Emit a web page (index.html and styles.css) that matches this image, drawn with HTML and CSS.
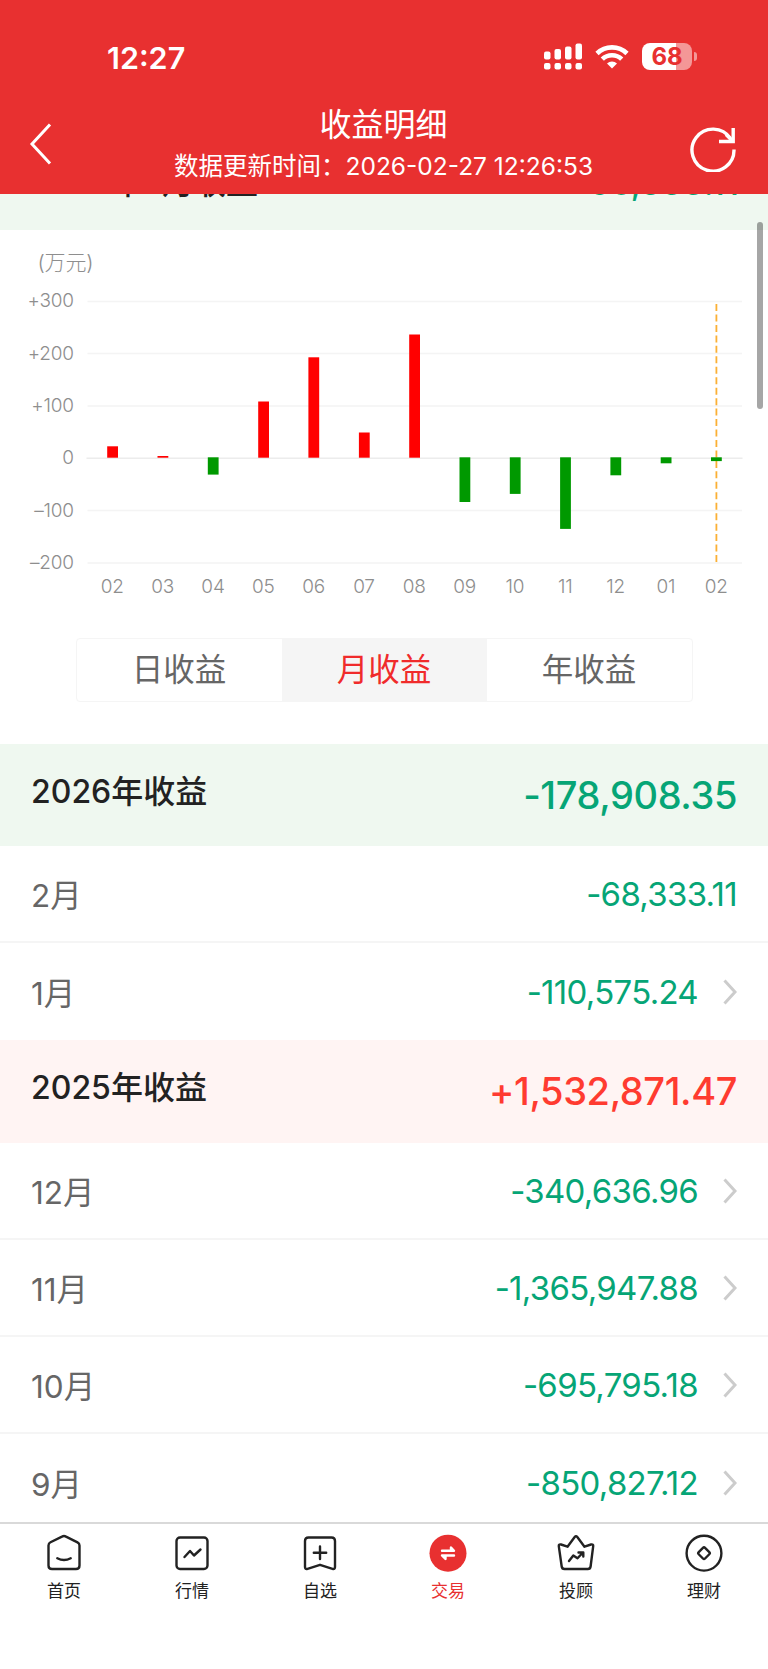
FILE: index.html
```html
<!DOCTYPE html>
<html lang="zh-CN">
<head>
  <meta charset="UTF-8">
  <meta name="viewport" content="width=device-width, initial-scale=1.0">
  <title>收益明细</title>
  <link rel="stylesheet" href="styles.css">
</head>
<body>
  <div class="app">
    <header class="header">
      <div class="status-bar">
        <span class="clock">12:27</span>
        <div class="status-icons">
          <svg class="signal" width="39" height="28" viewBox="0 0 39 28" fill="#fff">
            <rect x="0" y="8.500" width="6.500" height="8" rx="2"/>
            <rect x="10.500" y="6" width="6.500" height="10.500" rx="2"/>
            <rect x="21" y="3.500" width="6.500" height="13" rx="2"/>
            <rect x="31.500" y="0.500" width="6.500" height="16" rx="2"/>
            <rect x="0" y="20" width="6.500" height="6.500" rx="2"/>
            <rect x="10.500" y="20" width="6.500" height="6.500" rx="2"/>
            <rect x="21" y="20" width="6.500" height="6.500" rx="2"/>
            <rect x="31.500" y="20" width="6.500" height="6.500" rx="2"/>
          </svg>
          <svg class="wifi" width="34" height="26" viewBox="0 0 34 26" fill="none" stroke="#fff" stroke-width="4.600">
            <path d="M2 9.500a21.500 21.500 0 0 1 30 0"/>
            <path d="M7.300 15.200a13.800 13.800 0 0 1 19.400 0"/>
            <path d="M17 24.500l-5-5a7.100 7.100 0 0 1 10 0z" fill="#fff" stroke="none"/>
          </svg>
          <div class="battery">68</div>
          <span class="battery-tip"></span>
        </div>
      </div>
      <div class="nav-bar">
        <svg class="back" width="24" height="42" viewBox="0 0 24 42" fill="none" stroke="#fff" stroke-width="3">
          <path d="M21 1.500L3 21l18 19.500"/>
        </svg>
        <div class="nav-title">
          <h1>收益明细</h1>
          <p>数据更新时间：<span>2026-02-27 12:26:53</span></p>
        </div>
        <svg class="refresh" width="46" height="46" viewBox="0 0 46 46" fill="none" stroke="#fff" stroke-width="3.400">
          <path d="M44 23.500A21 21 0 1 1 40.500 12.500"/>
          <path d="M43.200 2v13.500H29"/>
          <path d="M36 8.500l6.500 6.500"/>
        </svg>
      </div>
    </header>

    <main class="content">
      <div class="month-total">
        <span class="label">2026年2月收益</span>
        <span class="amount">-68,333.11</span>
      </div>

      <svg class="chart" width="768" height="380" viewBox="0 230 768 380">
        <text class="unit" x="37.500" y="270">(万元)</text>
        <g class="grid">
          <path d="M87.500 301.500H742M87.500 353.500H742M87.500 406H742M87.500 510.500H742M87.500 563H742"/>
          <path class="zero" d="M86.500 458.300H742.500"/>
        </g>
        <g class="y-axis">
          <text x="73.800" y="307.200">+300</text>
          <text x="73.800" y="359.500">+200</text>
          <text x="73.800" y="411.800">+100</text>
          <text x="73.800" y="464.100">0</text>
          <text x="73.800" y="516.500">–100</text>
          <text x="73.800" y="568.800">–200</text>
        </g>
        <path class="cursor" d="M716.400 304V562"/>
        <g class="gain">
          <rect x="107.200" y="446.300" width="10.800" height="11.400"/>
          <rect x="157.500" y="456" width="10.800" height="1.700"/>
          <rect x="258.200" y="401.500" width="10.800" height="56.200"/>
          <rect x="308.400" y="357.300" width="10.800" height="100.400"/>
          <rect x="358.900" y="432.500" width="10.800" height="25.200"/>
          <rect x="409.200" y="334.500" width="10.800" height="123.200"/>
        </g>
        <g class="loss">
          <rect x="207.800" y="457.300" width="10.800" height="17.300"/>
          <rect x="459.500" y="457.300" width="10.800" height="44.700"/>
          <rect x="509.800" y="457.300" width="10.800" height="36.600"/>
          <rect x="560.100" y="457.300" width="10.800" height="71.600"/>
          <rect x="610.400" y="457.300" width="10.800" height="18"/>
          <rect x="660.700" y="457.300" width="10.800" height="6"/>
          <rect x="711" y="457.300" width="10.800" height="3.800"/>
        </g>
        <g class="x-axis">
          <text x="112.300" y="593">02</text>
          <text x="162.600" y="593">03</text>
          <text x="213" y="593">04</text>
          <text x="263.300" y="593">05</text>
          <text x="313.600" y="593">06</text>
          <text x="364" y="593">07</text>
          <text x="414.300" y="593">08</text>
          <text x="464.600" y="593">09</text>
          <text x="515" y="593">10</text>
          <text x="565.300" y="593">11</text>
          <text x="615.600" y="593">12</text>
          <text x="666" y="593">01</text>
          <text x="716.300" y="593">02</text>
        </g>
      </svg>

      <div class="tabs">
        <div class="tab">日收益</div>
        <div class="tab active">月收益</div>
        <div class="tab">年收益</div>
      </div>

      <section class="year">
        <div class="year-head down">
          <h2>2026年收益</h2>
          <strong>-178,908.35</strong>
        </div>
        <div class="row"><span>2月</span><b>-68,333.11</b></div>
        <div class="row"><span>1月</span><b>-110,575.24</b>
          <svg class="arrow" viewBox="0 0 14 26"><path d="M1.500 1.500L12 13 1.500 24.500"/></svg>
        </div>
      </section>

      <section class="year">
        <div class="year-head up">
          <h2>2025年收益</h2>
          <strong>+1,532,871.47</strong>
        </div>
        <div class="row"><span>12月</span><b>-340,636.96</b>
          <svg class="arrow" viewBox="0 0 14 26"><path d="M1.500 1.500L12 13 1.500 24.500"/></svg>
        </div>
        <div class="row"><span>11月</span><b>-1,365,947.88</b>
          <svg class="arrow" viewBox="0 0 14 26"><path d="M1.500 1.500L12 13 1.500 24.500"/></svg>
        </div>
        <div class="row"><span>10月</span><b>-695,795.18</b>
          <svg class="arrow" viewBox="0 0 14 26"><path d="M1.500 1.500L12 13 1.500 24.500"/></svg>
        </div>
        <div class="row"><span>9月</span><b>-850,827.12</b>
          <svg class="arrow" viewBox="0 0 14 26"><path d="M1.500 1.500L12 13 1.500 24.500"/></svg>
        </div>
      </section>
      <div class="scrollbar"></div>
    </main>

    <nav class="tab-bar">
      <a class="item">
        <svg viewBox="0 0 40 40">
          <path d="M20 3Q20.800 3 21.500 3.400L33.500 9.300Q35.500 10.300 35.500 12.500V32.500Q35.500 36 32 36H8Q4.500 36 4.500 32.500V12.500Q4.500 10.300 6.500 9.300L18.500 3.400Q19.200 3 20 3Z"/>
          <path d="M13.300 25.200Q20 28.700 26.700 25.200"/>
        </svg>
        <span>首页</span>
      </a>
      <a class="item">
        <svg viewBox="0 0 40 40">
          <rect x="4.500" y="4.500" width="31" height="31.500" rx="3.500"/>
          <path d="M12.500 24L18 18l4 4.500 6.500-6"/>
        </svg>
        <span>行情</span>
      </a>
      <a class="item">
        <svg viewBox="0 0 40 40">
          <path d="M8.500 4.500H31.500Q35 4.500 35 8V34Q35 36.500 32.500 35.800L20 31.800 7.500 35.800Q5 36.500 5 34V8Q5 4.500 8.500 4.500Z"/>
          <path d="M20 13.500V26M13.800 19.700H26.200"/>
        </svg>
        <span>自选</span>
      </a>
      <a class="item active">
        <svg viewBox="0 0 40 40">
          <circle cx="20" cy="20.200" r="18.500"/>
          <path d="M14 17.700H26L23 14.500V17M26 22.500H14L17.500 26V23"/>
        </svg>
        <span>交易</span>
      </a>
      <a class="item">
        <svg viewBox="0 0 40 40">
          <path d="M20 3.300Q20.700 3.300 21.300 4L28.500 13.700 35 11.500Q37.500 10.800 37.200 13.200L34.600 33.500Q34.300 36 31.800 36H8.500Q6 36 5.700 33.500L2.800 13.200Q2.500 10.800 5 11.500L11.500 13.700 18.700 4Q19.300 3.300 20 3.300Z"/>
          <path d="M13 28l4.300-5.500 4.200 2.800L26.500 20M22.500 19.500h4.800v4"/>
        </svg>
        <span>投顾</span>
      </a>
      <a class="item">
        <svg viewBox="0 0 40 40">
          <circle cx="20" cy="20.200" r="17.400"/>
          <rect x="15.500" y="15.700" width="9" height="9" rx="1.500" transform="rotate(45 20 20.200)"/>
        </svg>
        <span>理财</span>
      </a>
    </nav>
  </div>
</body>
</html>
```
FILE: styles.css
```css
* {
  box-sizing: border-box;
}
body {
  margin: 0;
  font-family: Inter, "Noto Sans CJK SC", sans-serif;
  background: #fff;
  color: #222;
}
h1, h2, p {
  margin: 0;
  font-weight: 400;
}
.app {
  width: 768px;
  height: 1669px;
  display: flex;
  flex-direction: column;
  overflow: hidden;
}

/* header */
.header {
  flex: none;
  height: 194px;
  background: #e83030;
  color: #fff;
}
.status-bar {
  height: 100px;
  padding: 14px 71px 0 107px;
  display: flex;
  justify-content: space-between;
  align-items: center;
}
.clock {
  font-size: 30.500px;
  font-weight: 600;
}
.status-icons {
  display: flex;
  align-items: center;
  margin-top: -1px;
}
.wifi {
  margin: 0 13px 0 12px;
}
.battery {
  width: 50px;
  height: 27px;
  line-height: 27px;
  border-radius: 8px;
  background: linear-gradient(90deg, #fff 68%, #f49797 68%);
  color: #e83030;
  font-size: 24px;
  font-weight: 700;
  text-align: center;
}
.battery-tip {
  width: 3px;
  height: 9px;
  margin-left: 2px;
  border-radius: 0 3px 3px 0;
  background: #f49797;
}
.nav-bar {
  height: 94px;
  padding: 0 32px 0 29px;
  display: flex;
  justify-content: space-between;
}
.back {
  margin: 23px 24px 0 0;
}
.refresh {
  margin-top: 26px;
}
.nav-title {
  padding-top: 1px;
  text-align: center;
}
.nav-title h1 {
  font-size: 32px;
  line-height: 48px;
}
.nav-title p {
  font-size: 24.500px;
  line-height: 34px;
  white-space: nowrap;
}

/* scrolled content */
.content {
  position: relative;
  flex: 1;
  min-height: 0;
  overflow: hidden;
}
.month-total {
  height: 36px;
  padding: 0 29px 0 30px;
  display: flex;
  justify-content: space-between;
  align-items: flex-start;
  overflow: hidden;
  background: #eff8f0;
}
.month-total .label {
  margin-top: -34px;
  font-size: 32px;
  line-height: 46px;
  font-weight: 500;
}
.month-total .amount {
  margin-top: -34px;
  font-size: 34px;
  line-height: 46px;
  font-weight: 500;
  color: #06a576;
}
.chart {
  display: block;
}
.chart text {
  font-size: 19px;
  font-weight: 300;
  letter-spacing: -0.200px;
  fill: #8e8e8e;
}
.chart .unit {
  font-size: 21px;
}
.y-axis {
  text-anchor: end;
}
.x-axis {
  text-anchor: middle;
}
.grid {
  stroke: #f4f4f4;
  stroke-width: 1.500;
}
.grid .zero {
  stroke: #ececec;
}
.cursor {
  stroke: #fbb034;
  stroke-width: 1.800;
  stroke-dasharray: 7 3.460;
}
.gain {
  fill: #f00;
}
.loss {
  fill: #090;
}
.tabs {
  width: 617px;
  height: 64px;
  margin: 28px auto 42px;
  display: flex;
  border: 1px solid #f5f5f5;
  border-radius: 4px;
}
.tab {
  flex: 1;
  font-size: 31.500px;
  line-height: 61px;
  text-align: center;
  color: #666;
}
.tab.active {
  background: #f5f5f5;
  color: #f02b2b;
}
.year-head {
  height: 102px;
  padding: 0 31px;
  display: flex;
  justify-content: space-between;
}
.year-head.down {
  background: #eff8f0;
  color: #06a576;
}
.year-head.up {
  height: 103px;
  background: #fff4f3;
  color: #ff3b30;
}
.year-head h2 {
  font-size: 32px;
  line-height: 95px;
  font-weight: 500;
  color: #222;
}
.year-head strong {
  font-size: 38px;
  line-height: 103px;
  font-weight: 500;
  letter-spacing: -0.400px;
}
.row {
  height: 97px;
  padding: 0 31px;
  display: flex;
  align-items: center;
  border-bottom: 2px solid #f5f5f5;
}
.row:last-child {
  border-bottom: none;
}
.row span {
  flex: 1;
  padding-bottom: 2px;
  font-size: 31.500px;
  color: #666;
}
.row b {
  padding-top: 1px;
  font-size: 33px;
  font-weight: 400;
  letter-spacing: -0.700px;
  color: #06a576;
}
.arrow {
  width: 14px;
  height: 26px;
  margin-left: 25px;
  fill: none;
  stroke: #ccc;
  stroke-width: 3;
}
.scrollbar {
  position: absolute;
  top: 28px;
  right: 5px;
  width: 6px;
  height: 187px;
  border-radius: 3px;
  background: rgba(0, 0, 0, 0.35);
}

/* bottom tab bar */
.tab-bar {
  flex: none;
  height: 147px;
  padding-top: 9px;
  display: flex;
  border-top: 2px solid #d9d9d9;
  background: #fff;
}
.item {
  flex: 1;
  display: flex;
  flex-direction: column;
  align-items: center;
}
.item svg {
  width: 40px;
  height: 40px;
  fill: none;
  stroke: #222;
  stroke-width: 2.400;
  stroke-linecap: round;
  stroke-linejoin: round;
}
.item span {
  margin-top: 6px;
  font-size: 17px;
  line-height: 24px;
}
.item.active {
  color: #e83030;
}
.item.active svg {
  stroke: #fff;
}
.item.active circle {
  fill: #e83030;
  stroke: none;
}
```
